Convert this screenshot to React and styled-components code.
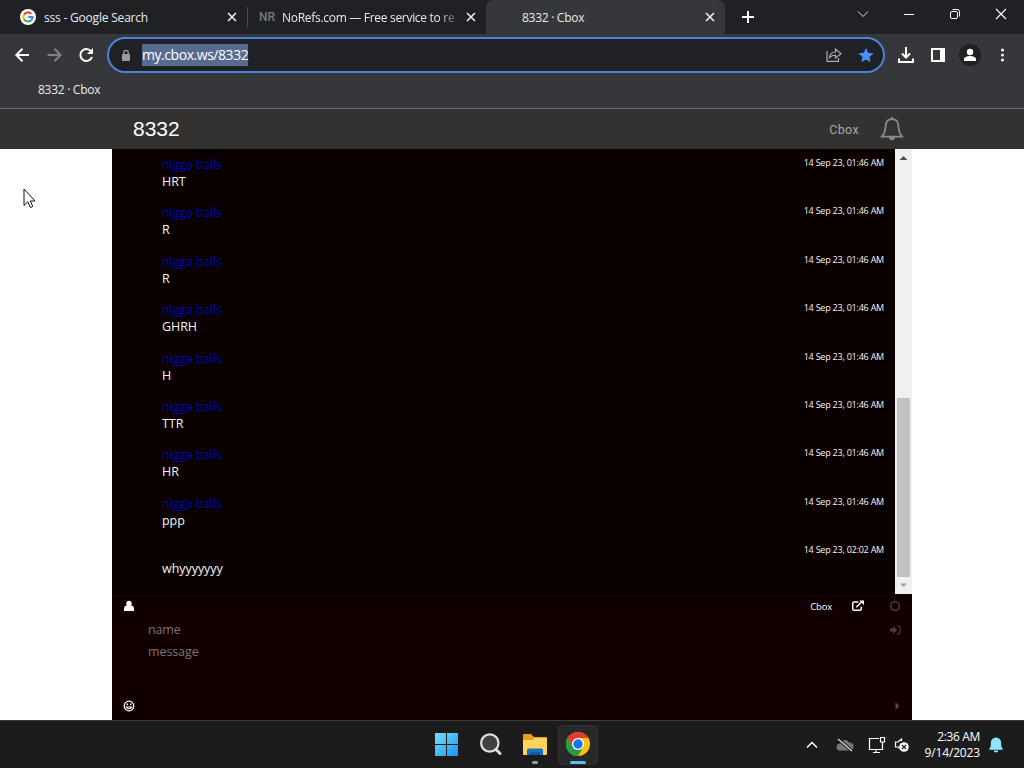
import React from 'react';
import styled, { createGlobalStyle } from 'styled-components';

const GlobalStyle = createGlobalStyle`
	* {
		box-sizing: border-box;
	}

	body {
		margin: 0;
		overflow: hidden;
		background: #fff;
		font-family: "Open Sans", "Noto Sans", sans-serif;
	}

	svg {
		display: block;
		flex: none;
	}
`;

const Screen = styled.div`
	width: 1024px;
	height: 768px;
	display: flex;
	flex-direction: column;
	overflow: hidden;
	position: relative;
`;

const Label = styled.span`
	font-family: ${({ $font }) => $font || 'inherit'};
	font-size: ${({ $size }) => $size || 12}px;
	font-weight: ${({ $weight }) => $weight || 400};
	letter-spacing: ${({ $spacing }) => $spacing || 0}px;
	color: ${({ $color }) => $color || '#e8eaed'};
	white-space: nowrap;
`;

/* browser */

const TabStrip = styled.div`
	height: 34px;
	flex: none;
	display: flex;
	background: #202124;
`;

const Tab = styled.div`
	width: ${({ $width }) => $width}px;
	height: 34px;
	display: flex;
	align-items: center;
	padding: 0 ${({ $right }) => $right}px 0 ${({ $left }) => $left}px;
	background: ${({ $active }) => ($active ? '#36373a' : 'transparent')};
	border-radius: 8px 8px 0 0;
`;

const TabTitle = styled(Label)`
	flex: 1;
	margin-left: ${({ $gap }) => $gap || 0}px;
	margin-right: 10px;
	${({ $fade }) => $fade && 'mask-image: linear-gradient(90deg, #000 90%, transparent 103%);'}
`;

const Divider = styled.div`
	width: 1px;
	height: 20px;
	margin-top: 7px;
	background: #4a4c50;
`;

const NewTab = styled.div`
	width: 46px;
	display: flex;
	align-items: center;
	justify-content: center;
`;

const WindowButtons = styled.div`
	margin-left: auto;
	height: 28px;
	display: flex;

	svg {
		width: 46px;
		height: 28px;
	}
`;

const Toolbar = styled.div`
	height: 42px;
	flex: none;
	display: flex;
	align-items: center;
	background: #36373a;
`;

const NavButtons = styled.div`
	width: 107px;
	display: flex;
	gap: 12px;
	padding-left: 12px;
`;

const AddressBar = styled.div`
	width: 778px;
	height: 36px;
	display: flex;
	align-items: center;
	padding: 0 9px 0 12px;
	border: 2px solid #4a82d8;
	border-radius: 18px;
	background: #202124;
`;

const Url = styled(Label)`
	height: 22px;
	line-height: 22px;
	margin-left: 11px;
	margin-right: auto;
	background: #566b8f;
`;

const ToolButtons = styled.div`
	display: flex;
	align-items: center;
	gap: 8px;
	padding-left: 9px;
`;

const Bookmarks = styled.div`
	height: 33px;
	flex: none;
	padding: 4px 0 0 38px;
	background: #36373a;
	border-bottom: 1px solid #6a6b6b;
	line-height: 16px;
`;

/* page */

const PageHeader = styled.header`
	height: 40px;
	flex: none;
	display: flex;
	align-items: center;
	padding: 0 120px 0 133px;
	background: #333230;
`;

const HeaderLinks = styled.div`
	display: flex;
	align-items: center;
	gap: 21px;
	margin-left: auto;
`;

const Chat = styled.main`
	width: 800px;
	height: 571px;
	flex: none;
	margin: 0 auto;
	display: flex;
	flex-direction: column;
	background: #0a0000;
`;

const MessageArea = styled.div`
	height: 445px;
	display: flex;
`;

const Messages = styled.div`
	flex: 1;
	padding: 7px 11px 0 50px;
	overflow: hidden;
`;

const Message = styled.div`
	height: 48.4px;
	display: flex;
	justify-content: space-between;
`;

const MessageBody = styled.div`
	display: flex;
	flex-direction: column;

	span {
		height: 17px;
		line-height: 17px;
	}
`;

const Time = styled(Label)`
	line-height: 14px;
`;

const Scrollbar = styled.div`
	width: 17px;
	display: flex;
	flex-direction: column;
	align-items: center;
	background: #f1f0f0;
`;

const ScrollThumb = styled.div`
	width: 13px;
	height: 179px;
	margin-top: auto;
	background: #c1c1c1;
`;

const Form = styled.div`
	flex: 1;
	display: grid;
	grid-template-rows: 24px 23px 21px 1fr 29px;
	background: #120001;
`;

const FormRow = styled.div`
	display: flex;
	align-items: center;
	padding: 0 10px 0 ${({ $left }) => $left || 10}px;
`;

const FormLinks = styled.div`
	display: flex;
	align-items: center;
	margin-left: auto;
`;

const Popout = styled.div`
	margin: 0 23px 0 19px;
`;

const PushRight = styled.div`
	margin-left: auto;
`;

/* taskbar */

const Taskbar = styled.footer`
	height: 48px;
	flex: none;
	display: grid;
	grid-template-columns: 424px 176px 1fr;
	background: #1c1c1c;
	border-top: 1px solid #3b3b3b;
`;

const Apps = styled.div`
	grid-column: 2;
	display: flex;
	align-items: center;
`;

const App44 = styled.div`
	width: 44px;
	height: 44px;
	display: flex;
	flex-direction: column;
	align-items: center;
	justify-content: flex-end;
`;

const FolderApp = styled(App44)`
	padding-bottom: 3px;
	margin-left: 1px;
`;

const ActiveApp = styled(App44)`
	width: 40px;
	height: 40px;
	margin: 0 2px;
	background: #292929;
	border: 1px solid #303030;
	border-radius: 4px;
`;

const Indicator = styled.div`
	width: ${({ $width }) => $width}px;
	height: 3px;
	margin-top: ${({ $gap }) => $gap}px;
	border-radius: 2px;
	background: ${({ $color }) => $color};
`;

const Tray = styled.div`
	display: flex;
	align-items: center;
	justify-content: flex-end;
	padding-right: 20px;
`;

const CloudIcon = styled.svg`
	margin-left: 17px;
`;

const NetworkIcon = styled.svg`
	margin-left: 14px;
`;

const VolumeIcon = styled.svg`
	margin-left: 7px;
`;

const Clock = styled.div`
	width: 64px;
	height: 32px;
	margin: 0 7px 0 7px;
	display: flex;
	flex-direction: column;
	align-items: flex-end;
	line-height: 16px;
	padding-right: 1px;
`;

const Star = styled.svg`
	margin-left: 16px;
`;

const Pointer = styled.svg`
	position: absolute;
	left: 23px;
	top: 188px;
`;

const GoogleLogo = () => (
	<svg width="16" height="16" viewBox="0 0 16 16">
		<circle cx="8" cy="8" r="8" fill="#fff" />
		<g fill="none" strokeWidth="2.1">
			<path d="M11.3 4.8A4.6 4.6 0 0 0 4 5.7" stroke="#ea4335" />
			<path d="M4 5.7a4.6 4.6 0 0 0 0 4.6" stroke="#fbbc05" />
			<path d="M4 10.3a4.6 4.6 0 0 0 7 1.1" stroke="#34a853" />
			<path d="M11 11.4A4.6 4.6 0 0 0 12.6 8H8.2" stroke="#4285f4" />
		</g>
	</svg>
);

const Close = () => (
	<svg width="10" height="10" viewBox="0 0 10 10" stroke="#eee" strokeWidth="1.6">
		<path d="M1 1l8 8M9 1L1 9" />
	</svg>
);

const Arrow = ({ flip, color }) => (
	<svg width="20" height="20" viewBox="0 0 20 20" fill="none" stroke={color} strokeWidth="2">
		<path d={flip ? 'M3.500 10h12M10.500 3.800l6 6.200-6 6.200' : 'M17 10H5M10.500 3.800L4.300 10l6.200 6.200'} />
	</svg>
);

const Bell = () => (
	<svg width="24" height="26" viewBox="0 0 24 26" fill="none" stroke="#8e8e8c" strokeWidth="1.7">
		<path d="M12 3.200c-4 0-6.200 2.700-6.400 7-.3 5.600-1 7.400-3.700 10.400h20.200c-2.700-3-3.400-4.800-3.700-10.400-.2-4.300-2.400-7-6.400-7z" />
		<path d="M12 1v2" />
		<path d="M8.800 21.300h6.400c-.4 3.900-6 3.900-6.400 0z" fill="#8e8e8c" stroke="none" />
	</svg>
);

const Folder = () => (
	<svg width="26" height="24" viewBox="0 0 26 24">
		<path d="M1 2q0-1 1-1h7l3 3h12q1 0 1 1v7H1z" fill="#e4a117" />
		<path d="M1 7h9l3-2h11q1 0 1 1v15q0 1-1 1H2q-1 0-1-1z" fill="#ffd35a" />
		<path d="M5 22v-5q0-1.500 1.500-1.500h13q1.500 0 1.500 1.500v5z" fill="#1673bd" />
		<path d="M8 22v-2.500h10V22z" fill="#0e559b" />
	</svg>
);

const Chrome = () => (
	<svg width="24" height="24" viewBox="0 0 24 24">
		<circle cx="12" cy="12" r="12" fill="#fbc116" />
		<path d="M1.600 6A12 12 0 0 1 22.400 6H12L6.800 15z" fill="#e33b2e" />
		<path d="M1.600 6A12 12 0 0 0 12 24L17.200 15H6.800z" fill="#259b46" />
		<circle cx="12" cy="12" r="6" fill="#fff" />
		<circle cx="12" cy="12" r="4.700" fill="#1a73e8" />
	</svg>
);

const Person = () => (
	<svg width="24" height="22" viewBox="0 0 24 22">
		<circle cx="12" cy="11" r="11" fill="#202124" />
		<circle cx="12" cy="8" r="3.200" fill="#fff" />
		<path d="M6 17v-2c0-2 3.500-3 6-3s6 1 6 3v2z" fill="#fff" />
	</svg>
);

const USER = 'nigga balls';

const messages = [
	{ name: USER, text: 'HRT', time: '14 Sep 23, 01:46 AM' },
	{ name: USER, text: 'R', time: '14 Sep 23, 01:46 AM' },
	{ name: USER, text: 'R', time: '14 Sep 23, 01:46 AM' },
	{ name: USER, text: 'GHRH', time: '14 Sep 23, 01:46 AM' },
	{ name: USER, text: 'H', time: '14 Sep 23, 01:46 AM' },
	{ name: USER, text: 'TTR', time: '14 Sep 23, 01:46 AM' },
	{ name: USER, text: 'HR', time: '14 Sep 23, 01:46 AM' },
	{ name: USER, text: 'ppp', time: '14 Sep 23, 01:46 AM' },
	{ name: '', text: 'whyyyyyyy', time: '14 Sep 23, 02:02 AM' },
];

function Browser() {
	return (
		<>
			<TabStrip>
				<Tab $width={247} $left={20} $right={10}>
					<GoogleLogo />
					<TabTitle $gap={8} $spacing={-0.2}>sss - Google Search</TabTitle>
					<Close />
				</Tab>
				<Divider />
				<Tab $width={238} $left={11} $right={10}>
					<Label $color="#77797c" $font="Roboto" $weight={500}>NR</Label>
					<TabTitle $gap={7} $spacing={-0.3} $fade>NoRefs.com — Free service to re</TabTitle>
					<Close />
				</Tab>
				<Tab $width={239} $left={36} $right={10} $active>
					<TabTitle $spacing={-0.28}>8332 · Cbox</TabTitle>
					<Close />
				</Tab>
				<NewTab>
					<svg width="12" height="12" viewBox="0 0 12 12" stroke="#fff" strokeWidth="2">
						<path d="M6 0v12M0 6h12" />
					</svg>
				</NewTab>
				<WindowButtons>
					<svg viewBox="0 0 46 28" fill="none" stroke="#ddd"><path d="M18 11.500l5 5 5-5" /></svg>
					<svg viewBox="0 0 46 28" fill="none" stroke="#fff"><path d="M18 14.500h10" /></svg>
					<svg viewBox="0 0 46 28" fill="none" stroke="#fff">
						<rect x="18.500" y="11.500" width="7" height="7" rx="1.500" />
						<path d="M20.500 9.500h5q2 0 2 2v5" />
					</svg>
					<svg viewBox="0 0 46 28" fill="none" stroke="#fff" strokeWidth="1.200"><path d="M18 9l10 10M28 9L18 19" /></svg>
				</WindowButtons>
			</TabStrip>
			<Toolbar>
				<NavButtons>
					<Arrow color="#fff" />
					<Arrow flip color="#808285" />
					<svg width="20" height="20" viewBox="0 0 20 20" fill="none" stroke="#fff" strokeWidth="2">
						<path d="M15 6.200A6 6 0 1 0 16 12" />
						<path d="M17 3v6h-6z" fill="#fff" stroke="none" />
					</svg>
				</NavButtons>
				<AddressBar>
					<svg width="10" height="13" viewBox="0 0 10 13">
						<rect x="1" y="5" width="8" height="7" rx="1" fill="#999b9e" />
						<path d="M2.800 5V3.500a2.200 2.200 0 0 1 4.400 0V5" fill="none" stroke="#999b9e" strokeWidth="1.300" />
					</svg>
					<Url $size={14} $spacing={-0.45} $color="#fff">my.cbox.ws/8332</Url>
					<svg width="16" height="16" viewBox="0 0 16 16" fill="none" stroke="#aaabad" strokeWidth="1.200">
						<path d="M1 4v10.400h11.500V11" />
						<path d="M3.500 10.500c.3-3.700 2.500-5.500 6-5.500V2l5.500 4.800L9.500 11V8.200c-2.500 0-4.500.6-6 2.300z" />
					</svg>
					<Star width="16" height="16" viewBox="0 0 16 16">
						<path d="M8 .8l2.200 5 5.300.5-4 3.600 1.200 5.300L8 12.400l-4.700 2.800 1.200-5.300-4-3.600 5.300-.5z" fill="#4c8df6" />
					</Star>
				</AddressBar>
				<ToolButtons>
					<svg width="24" height="18" viewBox="0 0 24 18" fill="none" stroke="#fff" strokeWidth="2">
						<path d="M12 1v10M8 7.500l4 4 4-4M5 12.500V16h14v-3.500" />
					</svg>
					<svg width="24" height="16" viewBox="0 0 24 16">
						<path d="M5 1h14v14H5zm2 2v10h7V3z" fill="#fff" fillRule="evenodd" />
					</svg>
					<Person />
					<svg width="26" height="16" viewBox="0 0 26 16" fill="#eee">
						<circle cx="12.500" cy="3" r="1.600" />
						<circle cx="12.500" cy="8" r="1.600" />
						<circle cx="12.500" cy="13" r="1.600" />
					</svg>
				</ToolButtons>
			</Toolbar>
			<Bookmarks>
				<Label $spacing={-0.28}>8332 · Cbox</Label>
			</Bookmarks>
		</>
	);
}

function Cbox() {
	return (
		<>
			<PageHeader>
				<Label $font='"Liberation Sans"' $size={21} $color="#fff">8332</Label>
				<HeaderLinks>
					<Label $font="Roboto" $size={12.5} $color="#aaa9a7" $spacing={0.35}>Cbox</Label>
					<Bell />
				</HeaderLinks>
			</PageHeader>
			<Chat>
				<MessageArea>
					<Messages>
						{messages.map(({ name, text, time }, index) => (
							<Message key={index}>
								<MessageBody>
									<Label $color="#0000b8" $weight={500} $spacing={0.08}>{name}</Label>
									<Label $size={12.5} $color="#f4f4f4" $spacing={-0.05}>{text}</Label>
								</MessageBody>
								<Time $size={9} $weight={500} $color="#f6f6f6" $spacing={-0.22}>{time}</Time>
							</Message>
						))}
					</Messages>
					<Scrollbar>
						<svg width="17" height="17" viewBox="0 0 17 17"><path d="M4.500 11l4-4 4 4z" fill="#505050" /></svg>
						<ScrollThumb />
						<svg width="17" height="17" viewBox="0 0 17 17"><path d="M5 6.500h7L8.500 10z" fill="#a3a3a3" /></svg>
					</Scrollbar>
				</MessageArea>
				<Form>
					<FormRow $left={11}>
						<svg width="12" height="12" viewBox="0 0 12 12" fill="#fff">
							<circle cx="6" cy="3.500" r="2.700" />
							<path d="M1 11V8.500Q1 6 3 5.500h6q2 .5 2 3V11z" />
						</svg>
						<FormLinks>
							<Label $size={9.5} $color="#fff" $spacing={-0.2}>Cbox</Label>
							<Popout>
								<svg width="14" height="12" viewBox="0 0 14 12" fill="none" stroke="#fff" strokeWidth="1.500">
									<path d="M7.500 2H3.300Q1.700 2 1.700 3.500v5.200q0 1.600 1.600 1.600h5.500q1.500 0 1.500-1.600V6.800" />
									<path d="M5.300 7.200l5.500-5.500" />
									<path d="M8.300.4H13v4.500z" fill="#fff" stroke="none" />
								</svg>
							</Popout>
							<svg width="14" height="12" viewBox="0 0 14 12"><circle cx="7" cy="6" r="4.400" fill="none" stroke="#453636" strokeWidth="1.700" /></svg>
						</FormLinks>
					</FormRow>
					<FormRow $left={36}>
						<Label $size={12.5} $color="#7d7272" $spacing={-0.15}>name</Label>
						<PushRight>
							<svg width="14" height="12" viewBox="0 0 14 12">
								<path d="M2 4.500h3V2l4.200 4L5 10V7.500H2z" fill="#4c3d3d" />
								<path d="M8.500 2h2q1.500 0 1.500 1.500v5q0 1.500-1.500 1.500h-2" fill="none" stroke="#4c3d3d" strokeWidth="1.200" />
							</svg>
						</PushRight>
					</FormRow>
					<FormRow $left={36}>
						<Label $size={12.5} $color="#7d7272" $spacing={-0.1}>message</Label>
					</FormRow>
					<div />
					<FormRow $left={11}>
						<svg width="12" height="12" viewBox="0 0 12 12" fill="none" stroke="#fff" strokeWidth="1.200">
							<circle cx="6" cy="6" r="4.800" />
							<path d="M3.300 7c.8 2.300 4.600 2.300 5.400 0z" />
							<path d="M4.300 3.400v1.800M7.700 3.400v1.800" strokeWidth="1.500" />
						</svg>
						<PushRight>
							<svg width="10" height="10" viewBox="0 0 10 10"><path d="M3.500 1l4 4-4 4z" fill="#594747" /></svg>
						</PushRight>
					</FormRow>
				</Form>
			</Chat>
		</>
	);
}

function App() {
	return (
		<>
			<GlobalStyle />
			<Screen>
				<Browser />
				<Cbox />
				<Taskbar>
					<Apps>
						<App44>
							<svg width="44" height="44" viewBox="0 0 44 44">
								<defs>
									<linearGradient id="win" x1="0" y1="0" x2="1" y2="1">
										<stop offset="0" stopColor="#7bdcff" />
										<stop offset="1" stopColor="#1697ea" />
									</linearGradient>
								</defs>
								<path d="M11 10h11v11H11zM23 10h11v11H23zM11 22h11v11H11zM23 22h11v11H23z" fill="url(#win)" />
							</svg>
						</App44>
						<App44>
							<svg width="44" height="44" viewBox="0 0 44 44" fill="none" stroke="#dededf">
								<path d="M28 26.500l4 4" strokeWidth="3" strokeLinecap="round" />
								<circle cx="21.800" cy="20" r="8.700" fill="#414141" strokeWidth="2.200" />
							</svg>
						</App44>
						<FolderApp>
							<Folder />
							<Indicator $width={6} $gap={4} $color="#9a9a9a" />
						</FolderApp>
						<ActiveApp>
							<Chrome />
							<Indicator $width={16} $gap={5} $color="#5cbcf2" />
						</ActiveApp>
					</Apps>
					<Tray>
						<svg width="14" height="14" viewBox="0 0 14 14" fill="none" stroke="#fff" strokeWidth="1.500"><path d="M2 9.500l5-5 5 5" /></svg>
						<CloudIcon width="18" height="16" viewBox="0 0 18 16">
							<path d="M4 13.500a3.500 3.500 0 0 1 0-7 5 5 0 0 1 9-1 4 4 0 0 1 1 8z" fill="#777" />
							<path d="M2 2l14 12" stroke="#1c1c1c" strokeWidth="3" />
							<path d="M2 2l14 12" stroke="#ddd" strokeWidth="1.200" />
						</CloudIcon>
						<NetworkIcon width="18" height="18" viewBox="0 0 18 18" fill="none" stroke="#fff" strokeWidth="1.200">
							<path d="M11 2.500H1.500v11h13V9M5 16.500h7M8 13.500v3" />
							<path d="M12.500 1.500h4v4.500h-4zM14.500 6v3" />
						</NetworkIcon>
						<VolumeIcon width="17" height="16" viewBox="0 0 17 16" fill="none" stroke="#fff" strokeWidth="1.200">
							<path d="M8.500 4V2L5 5H2.500v5H5l1.500 1.500" />
							<circle cx="11" cy="10" r="4.800" fill="#fff" stroke="none" />
							<path d="M9 8l4 4M13 8l-4 4" stroke="#1c1c1c" />
						</VolumeIcon>
						<Clock>
							<Label $color="#fff" $spacing={-0.35}>2:36 AM</Label>
							<Label $color="#fff" $spacing={-0.15}>9/14/2023</Label>
						</Clock>
						<svg width="16" height="16" viewBox="0 0 16 16" fill="#8de5f7">
							<path d="M8 .5a5.200 5.200 0 0 0-5.200 5.200V9L1.300 12v.7h13.400V12l-1.500-3V5.700A5.200 5.200 0 0 0 8 .5zM5.700 13.500a2.300 2 0 0 0 4.600 0z" />
						</svg>
					</Tray>
				</Taskbar>
				<Pointer width="13" height="21" viewBox="0 0 13 21">
					<path d="M1 1v16.500l3.800-3.700 2.500 5.700 2.500-1-2.500-5.500H12z" fill="#fff" stroke="#111" />
				</Pointer>
			</Screen>
		</>
	);
}

export default App;
